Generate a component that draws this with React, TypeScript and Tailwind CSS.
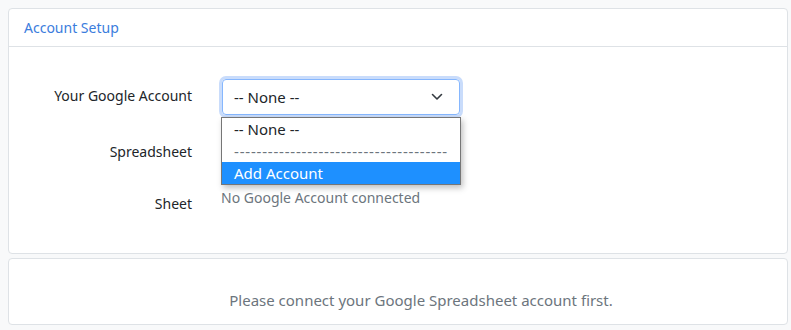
import React from "react";

export default function App() {
  return (
    <div className="w-[791px] h-[330px] bg-[#f8f9fa] pt-2 pl-2 pr-[3px] flex flex-col gap-[4px] font-['Noto_Sans',sans-serif] text-[14px] text-[#212529] overflow-hidden">
      <div className="h-[246px] shrink-0 bg-white border border-[#dee2e6] rounded-[4px] flex flex-col">
        <div className="h-[38px] shrink-0 border-b border-[#dee2e6] px-[15px] flex items-center text-[#3b7ddd]">
          Account Setup
        </div>
        <div className="pt-[32px] grid grid-cols-[183px_1fr] gap-x-[30px]">
          <div className="h-[36px] flex items-center justify-end pb-[3px]">Your Google Account</div>
          <div className="relative w-[238px] h-[36px]">
            <div className="w-full h-full border border-[#86b7fe] rounded-[4px] shadow-[0_0_0_3px_#c9dcfb] flex items-center justify-between pl-[11px] pr-[16px] text-[15px]">
              <span>-- None --</span>
              <svg width="12" height="8" viewBox="0 0 12 8" fill="none">
                <path d="M1.5 1.5 L6 6 L10.5 1.5" stroke="#343a40" strokeWidth="1.6" strokeLinecap="round" strokeLinejoin="round" />
              </svg>
            </div>
            <div className="absolute left-[-1px] top-[38px] w-[240px] bg-white border border-[#767676] shadow-[2px_3px_6px_rgba(0,0,0,0.25)] text-[15px] z-10">
              <div className="h-[22px] flex items-center pl-[12px]">-- None --</div>
              <div className="h-[22px] flex items-center pl-[12px] text-[#6c757d] whitespace-nowrap tracking-[0.8px]">
                --------------------------------------
              </div>
              <div className="h-[22px] flex items-center pl-[12px] bg-[#1e90ff] text-white">Add Account</div>
            </div>
          </div>
          <div className="mt-[18px] h-[36px] flex items-center justify-end">Spreadsheet</div>
          <div className="mt-[18px] h-[36px]"></div>
          <div className="mt-[16px] h-[36px] flex items-center justify-end">Sheet</div>
          <div className="mt-[16px] h-[36px] pt-[2px] text-[#6c757d] -ml-[1px]">No Google Account connected</div>
        </div>
      </div>
      <div className="h-[67px] shrink-0 bg-white border border-[#dee2e6] rounded-[4px] pt-[30px] pl-[46px] text-center text-[15px] text-[#6c757d]">
        Please connect your Google Spreadsheet account first.
      </div>
    </div>
  );
}
